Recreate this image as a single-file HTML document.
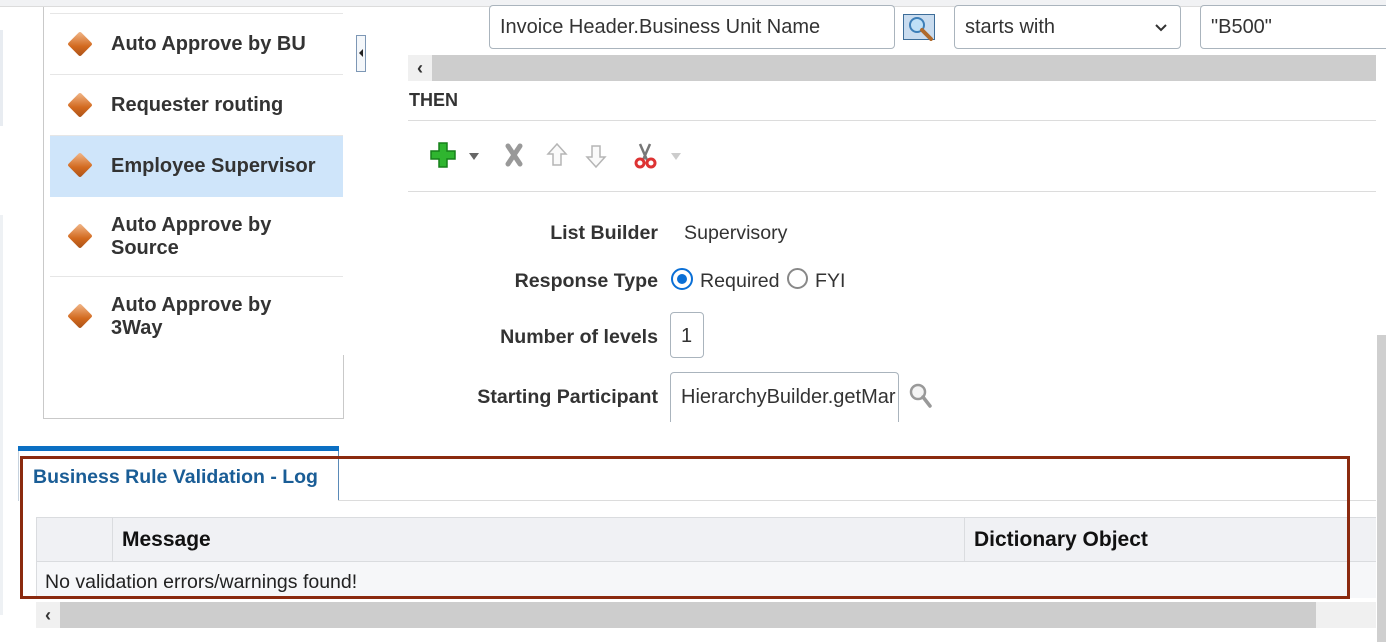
<!DOCTYPE html>
<html><head><meta charset="utf-8"><style>
*{box-sizing:border-box;margin:0;padding:0}
body{width:1386px;height:642px;overflow:hidden;background:#fff;font-family:"Liberation Sans",Arial,sans-serif;position:relative;color:#333}
.a{position:absolute}
.item{position:absolute;left:50px;width:293px;border-bottom:1px solid #e6e6e6;font-weight:bold;font-size:20px;color:#333}
.item .t{position:absolute;left:61px;line-height:23px}
.dia{position:absolute;left:21px;width:18px;height:18px;transform:rotate(45deg);background:linear-gradient(135deg,#f2b98c,#d2691e 60%,#a9521a);border-radius:2px}
.lbl{position:absolute;right:728px;font-weight:bold;font-size:19.6px;color:#333;white-space:nowrap}
.val{position:absolute;left:684px;font-size:19.6px;color:#333}
.inp{position:absolute;border:1px solid #aab4bd;border-radius:4px;background:#fff;font-size:20px;color:#333;padding-left:10px;overflow:hidden;white-space:nowrap}
</style></head><body>
<div class="a" style="left:0;top:0;width:1386px;height:7px;background:#f1f2f4;border-bottom:1px solid #dcdcdc"></div>
<div class="a" style="left:0;top:30px;width:3px;height:96px;background:#e8ecf1"></div>
<div class="a" style="left:0;top:215px;width:3px;height:400px;background:#eef1f4"></div>
<div class="a" style="left:43px;top:7px;width:1px;height:412px;background:#c9c9c9"></div>
<div class="a" style="left:43px;top:418px;width:301px;height:1px;background:#c9c9c9"></div>
<div class="a" style="left:343px;top:355px;width:1px;height:64px;background:#c9c9c9"></div>
<div class="a" style="left:50px;top:13px;width:293px;height:1px;background:#e6e6e6"></div>
<div class="item" style="top:14px;height:61px"><div class="dia" style="top:21px"></div><div class="t" style="top:19px">Auto Approve by BU</div></div>
<div class="item" style="top:75px;height:61px"><div class="dia" style="top:21px"></div><div class="t" style="top:19px">Requester routing</div></div>
<div class="item" style="top:136px;height:61px;background:#cfe5fa;border-bottom:none"><div class="dia" style="top:20px"></div><div class="t" style="top:19px">Employee Supervisor</div></div>
<div class="item" style="top:197px;height:80px"><div class="dia" style="top:30px"></div><div class="t" style="top:17px">Auto Approve by<br>Source</div></div>
<div class="item" style="top:277px;height:79px;border-bottom:none"><div class="dia" style="top:30px"></div><div class="t" style="top:17px">Auto Approve by<br>3Way</div></div>
<div class="a" style="left:356px;top:35px;width:10px;height:37px;border:1px solid #7d97b5;background:#f4f7fa"><div style="position:absolute;left:2px;top:13px;width:0;height:0;border-top:4px solid transparent;border-bottom:4px solid transparent;border-right:4px solid #222"></div></div>
<div class="inp" style="left:489px;top:5px;width:406px;height:44px;line-height:43px">Invoice Header.Business Unit Name</div>
<div class="a" style="left:903px;top:14px;width:32px;height:26px;border:1px solid #3d6d99;background:#c9dcef"><svg width="32" height="26" viewBox="0 0 32 26"><circle cx="13" cy="10" r="7" fill="#bfe0f7" stroke="#3d7fb8" stroke-width="2"/><path d="M18 15 L27 24" stroke="#b06a2c" stroke-width="4" stroke-linecap="round"/></svg></div>
<div class="inp" style="left:954px;top:5px;width:227px;height:44px;line-height:43px">starts with<svg style="position:absolute;right:12px;top:16px" width="14" height="12" viewBox="0 0 14 12"><path d="M2 3l5 5 5-5" fill="none" stroke="#333" stroke-width="2"/></svg></div>
<div class="inp" style="left:1200px;top:5px;width:190px;height:44px;line-height:43px">"B500"</div>
<div class="a" style="left:408px;top:55px;width:968px;height:26px;background:#cdcdcd"></div>
<div class="a" style="left:408px;top:55px;width:24px;height:26px;background:#f0f0f0;font-size:18px;font-weight:bold;text-align:center;line-height:26px">&#8249;</div>
<div class="a" style="left:409px;top:90px;font-weight:bold;font-size:18px;color:#333">THEN</div>
<div class="a" style="left:408px;top:120px;width:968px;height:1px;background:#dcdcdc"></div>
<div class="a" style="left:408px;top:191px;width:968px;height:1px;background:#dcdcdc"></div>
<svg class="a" style="left:428px;top:140px" width="270" height="32" viewBox="0 0 270 32">
<path d="M11 3h8v8h8v8h-8v8h-8v-8h-8v-8h8z" fill="#2fb52f" stroke="#16801a" stroke-width="1.5"/>
<path d="M41 13h10l-5 7z" fill="#666"/>
<path d="M80 6l12 18M92 6l-12 18" stroke="#999" stroke-width="5" stroke-linecap="round"/>
<path d="M129 4l-9 10h5v11h8v-11h5z" fill="#fafafa" stroke="#b5b5b5" stroke-width="1.5"/>
<path d="M168 27l-9-10h5v-11h8v11h5z" fill="#fafafa" stroke="#b5b5b5" stroke-width="1.5"/>
<path d="M212 4l7 16M222 4l-7 16" stroke="#777" stroke-width="2.5"/>
<circle cx="212" cy="23" r="4" fill="none" stroke="#d33" stroke-width="3"/><circle cx="223" cy="23" r="4" fill="none" stroke="#d33" stroke-width="3"/>
<path d="M243 13h10l-5 7z" fill="#ccc"/>
</svg>
<div class="lbl" style="top:222px">List Builder</div><div class="val" style="top:222px">Supervisory</div>
<div class="lbl" style="top:270px">Response Type</div>
<div class="a" style="left:671px;top:268px;width:22px;height:22px;border:2px solid #0a6fd6;border-radius:50%"><div style="position:absolute;left:4px;top:4px;width:10px;height:10px;border-radius:50%;background:#0a6fd6"></div></div>
<div class="val" style="left:700px;top:270px">Required</div>
<div class="a" style="left:787px;top:268px;width:21px;height:21px;border:2px solid #888;border-radius:50%"></div>
<div class="val" style="left:815px;top:270px">FYI</div>
<div class="lbl" style="top:326px">Number of levels</div>
<div class="inp" style="left:670px;top:312px;width:34px;height:46px;line-height:46px;padding-left:10px">1</div>
<div class="lbl" style="top:386px">Starting Participant</div>
<div class="inp" style="left:670px;top:372px;width:229px;height:50px;line-height:48px;border-bottom:none;border-radius:4px 4px 0 0">HierarchyBuilder.getMar</div>
<svg class="a" style="left:908px;top:382px" width="26" height="28" viewBox="0 0 26 28"><circle cx="10" cy="10" r="7" fill="#f4f4f4" stroke="#999" stroke-width="2.5"/><path d="M15 15l7 9" stroke="#999" stroke-width="3.5" stroke-linecap="round"/></svg>
<div class="a" style="left:1377px;top:335px;width:9px;height:307px;background:#cfcfcf"></div>
<div class="a" style="left:18px;top:446px;width:321px;height:5px;background:#0b6fc3"></div>
<div class="a" style="left:18px;top:451px;width:1px;height:50px;background:#c6d2de"></div>
<div class="a" style="left:338px;top:451px;width:1px;height:50px;background:#5a8ab8"></div>
<div class="a" style="left:33px;top:466px;font-weight:bold;font-size:19.5px;color:#1a5d96">Business Rule Validation - Log</div>
<div class="a" style="left:338px;top:500px;width:1038px;height:1px;background:#dcdcdc"></div>
<div class="a" style="left:36px;top:517px;width:1340px;height:45px;background:#f0f1f4;border-top:1px solid #dadcdf;border-bottom:1px solid #dadcdf;border-left:1px solid #dadcdf"></div>
<div class="a" style="left:112px;top:518px;width:1px;height:43px;background:#dadcdf"></div>
<div class="a" style="left:964px;top:518px;width:1px;height:43px;background:#dadcdf"></div>
<div class="a" style="left:122px;top:528px;font-weight:bold;font-size:21px;color:#111">Message</div>
<div class="a" style="left:974px;top:528px;font-weight:bold;font-size:21px;color:#111">Dictionary Object</div>
<div class="a" style="left:36px;top:562px;width:1340px;height:36px;background:#f6f7f9;border-left:1px solid #dadcdf"></div>
<div class="a" style="left:45px;top:571px;font-size:19.5px;color:#222">No validation errors/warnings found!</div>
<div class="a" style="left:36px;top:602px;width:1280px;height:26px;background:#cdcdcd"></div>
<div class="a" style="left:36px;top:602px;width:24px;height:26px;background:#f0f0f0;font-size:18px;font-weight:bold;text-align:center;line-height:26px">&#8249;</div>
<div class="a" style="left:1316px;top:602px;width:60px;height:26px;background:#f0f0f0"></div>
<div class="a" style="left:20px;top:456px;width:1330px;height:143px;border:3px solid #8b2a0f"></div>
</body></html>
